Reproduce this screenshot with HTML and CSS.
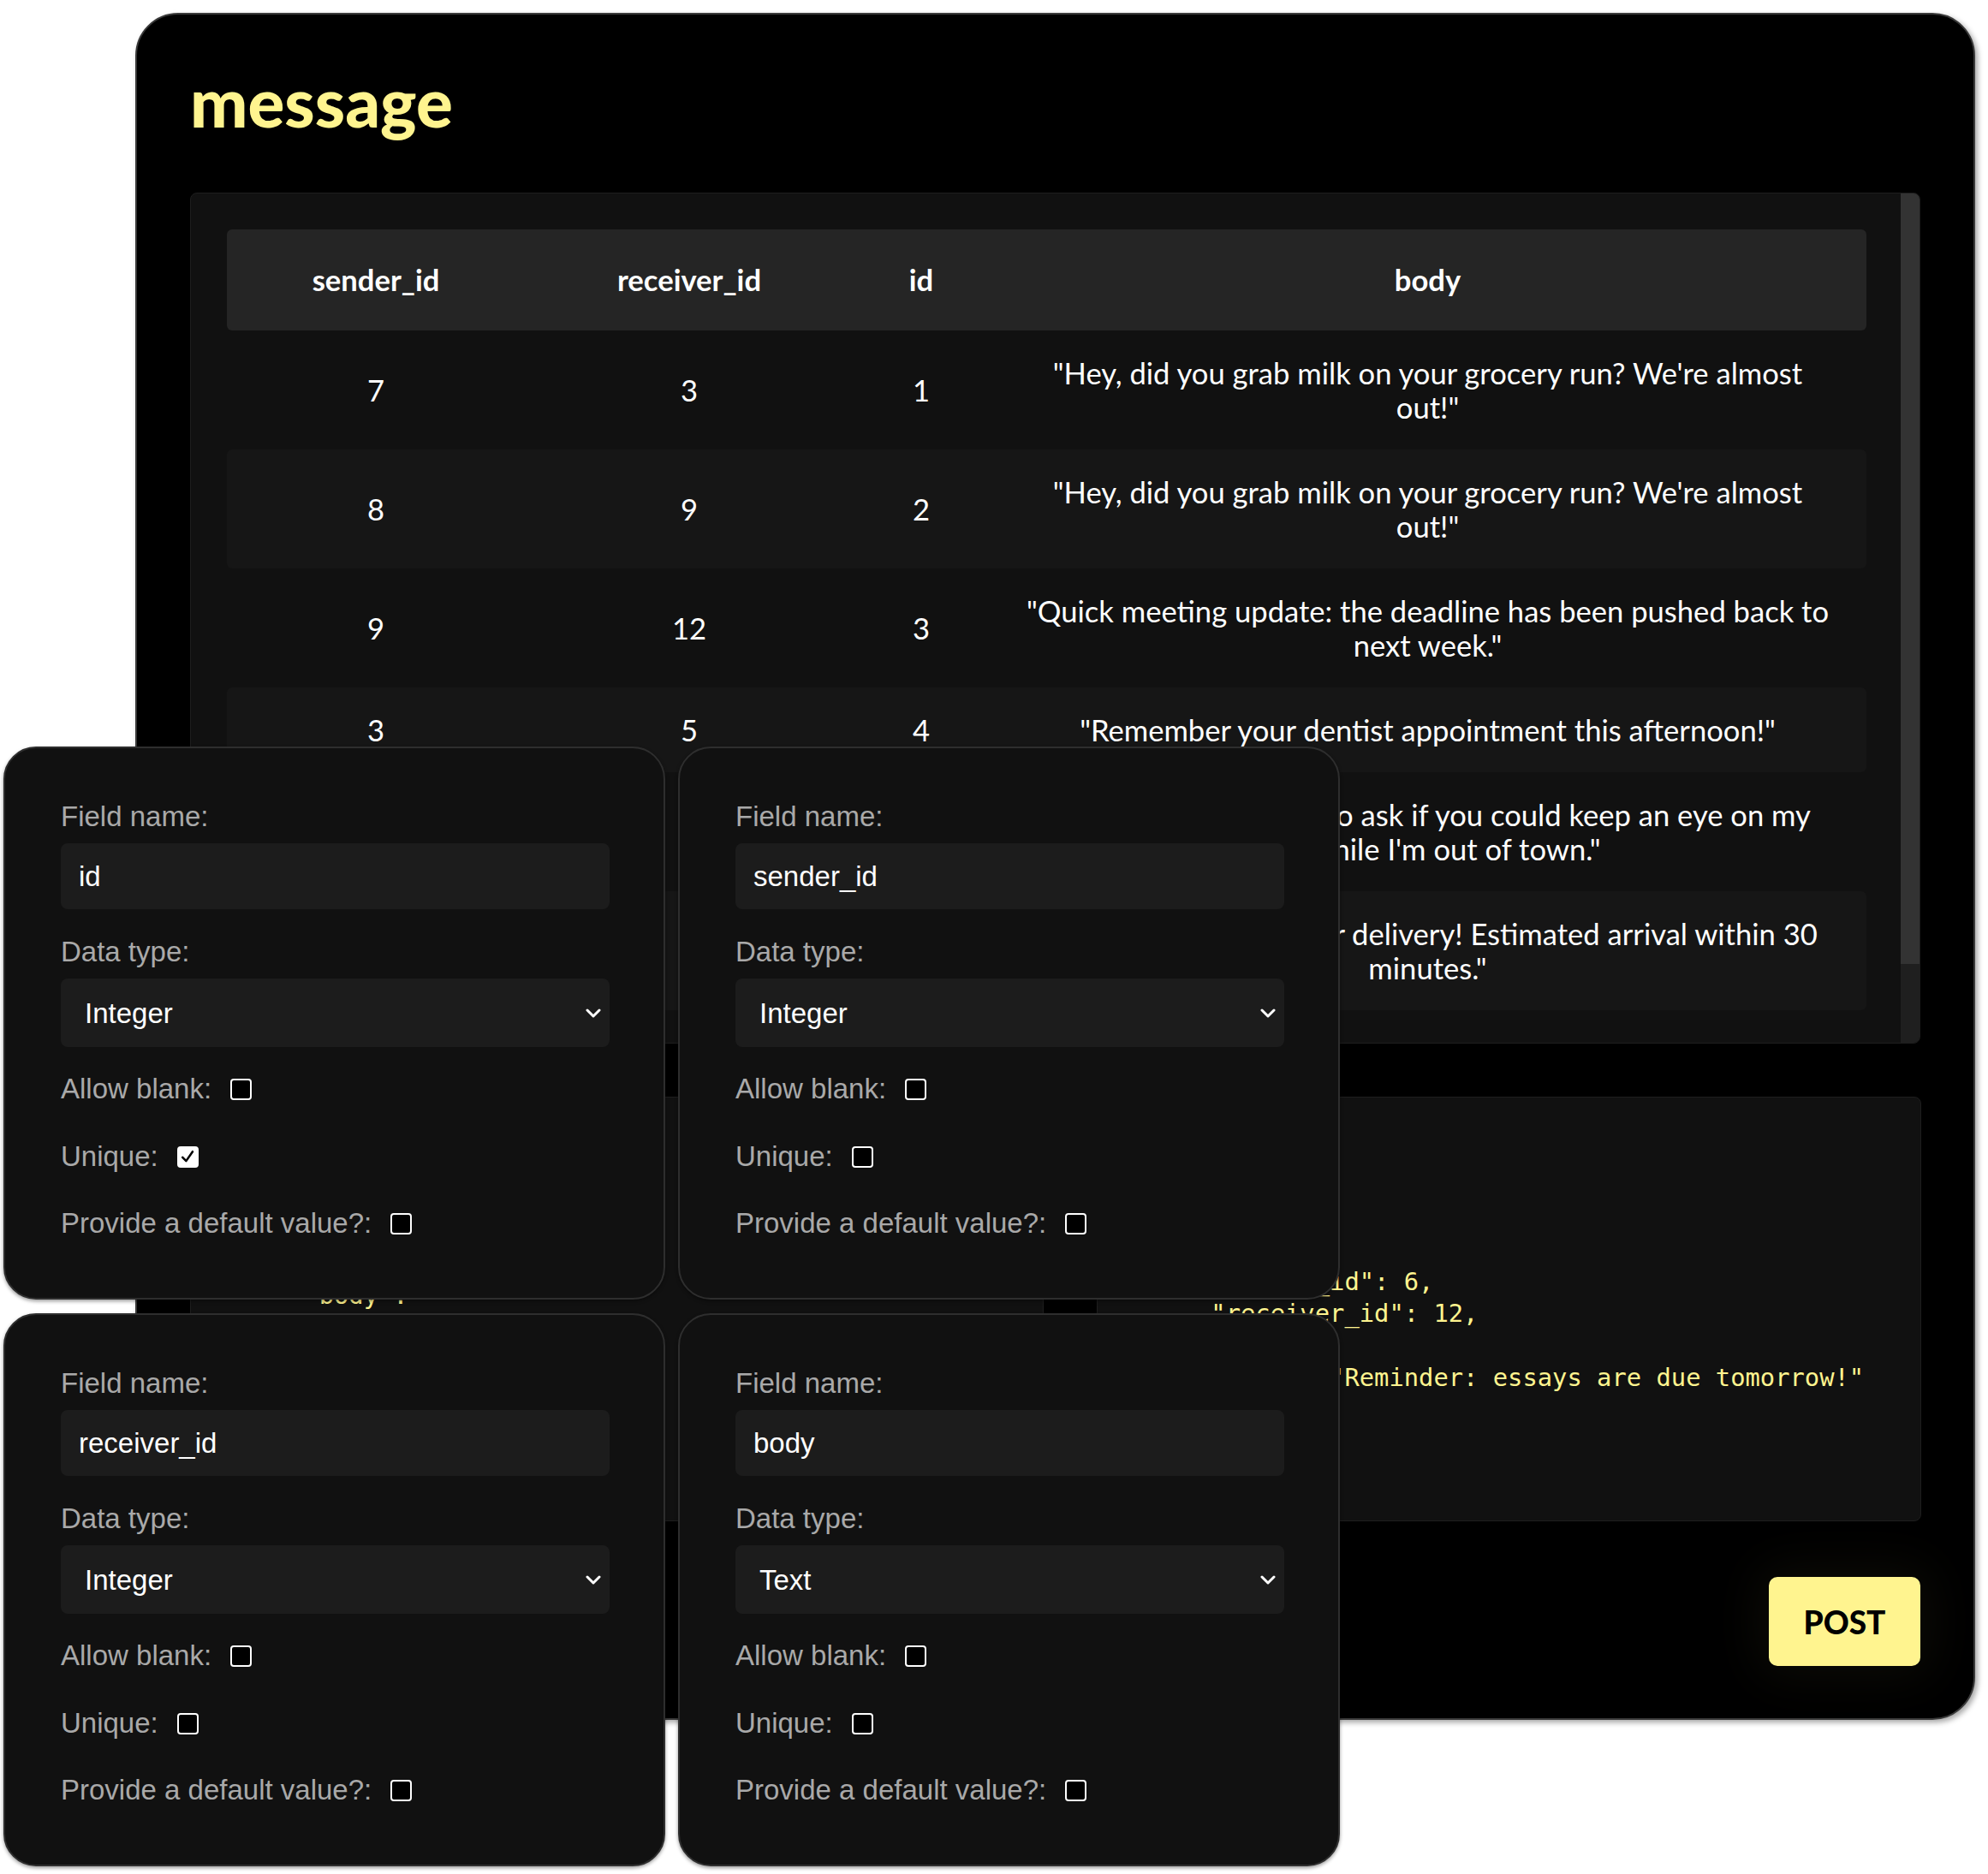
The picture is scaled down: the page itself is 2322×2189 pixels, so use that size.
FILE: index.html
```html
<!DOCTYPE html>
<html lang="en">
<head>
<meta charset="utf-8">
<title>message</title>
<link rel="stylesheet" href="styles.css">
</head>
<body>
<main class="window">
  <h1 class="title">message</h1>
  <div class="table-box">
    <div class="table-scroll">
      <table class="data">
        <colgroup><col class="c1"><col class="c2"><col class="c3"><col class="c4"></colgroup>
        <thead>
          <tr><th>sender_id</th><th>receiver_id</th><th>id</th><th>body</th></tr>
        </thead>
        <tbody>
          <tr><td>7</td><td>3</td><td>1</td><td>"Hey, did you grab milk on your grocery run? We're almost out!"</td></tr>
          <tr><td>8</td><td>9</td><td>2</td><td>"Hey, did you grab milk on your grocery run? We're almost out!"</td></tr>
          <tr><td>9</td><td>12</td><td>3</td><td>"Quick meeting update: the deadline has been pushed back to next week."</td></tr>
          <tr><td>3</td><td>5</td><td>4</td><td>"Remember your dentist appointment this afternoon!"</td></tr>
          <tr><td>5</td><td>7</td><td>5</td><td>"Hey friend, I wanted to ask if you could keep an eye on my dog while I'm out of town."</td></tr>
          <tr><td>12</td><td>8</td><td>6</td><td>"Your package is out for delivery! Estimated arrival within 30 minutes."</td></tr>
        </tbody>
      </table>
    </div>
    <div class="scrollbar"><div class="thumb"></div></div>
  </div>
  <div class="code-row">
<pre class="code code-left">{
    "sender_id": int,
    "receiver_id": int,
    "id": int,
    "body":
        text
}</pre>
<pre class="code code-right">{
    "sender_id": 6,
    "receiver_id": 12,
    "id": 7,
    "body": "Reminder: essays are due tomorrow!"
}</pre>
  </div>
  <div class="actions"><button class="post" type="button">POST</button></div>
</main>

<div class="fields">
  <section class="field-card">
    <label class="lbl">Field name:</label>
    <input class="text-in" type="text" value="id">
    <label class="lbl lbl-gap">Data type:</label>
    <div class="select-wrap">
      <select class="sel"><option>Integer</option></select>
      <svg class="chev" viewBox="0 0 18 11" width="18" height="11"><path d="M2 2 L9 9 L16 2" fill="none" stroke="#fff" stroke-width="3" stroke-linecap="round" stroke-linejoin="round"/></svg>
    </div>
    <div class="check-row r1"><span class="lbl">Allow blank:</span><span class="box"></span></div>
    <div class="check-row r2"><span class="lbl">Unique:</span><span class="box on"><svg viewBox="0 0 25 25" width="21" height="21"><path d="M5 13 L10 18 L19 5" fill="none" stroke="#000" stroke-width="3" stroke-linecap="round" stroke-linejoin="round"/></svg></span></div>
    <div class="check-row r3"><span class="lbl">Provide a default value?:</span><span class="box"></span></div>
  </section>

  <section class="field-card">
    <label class="lbl">Field name:</label>
    <input class="text-in" type="text" value="sender_id">
    <label class="lbl lbl-gap">Data type:</label>
    <div class="select-wrap">
      <select class="sel"><option>Integer</option></select>
      <svg class="chev" viewBox="0 0 18 11" width="18" height="11"><path d="M2 2 L9 9 L16 2" fill="none" stroke="#fff" stroke-width="3" stroke-linecap="round" stroke-linejoin="round"/></svg>
    </div>
    <div class="check-row r1"><span class="lbl">Allow blank:</span><span class="box"></span></div>
    <div class="check-row r2"><span class="lbl">Unique:</span><span class="box"></span></div>
    <div class="check-row r3"><span class="lbl">Provide a default value?:</span><span class="box"></span></div>
  </section>

  <section class="field-card">
    <label class="lbl">Field name:</label>
    <input class="text-in" type="text" value="receiver_id">
    <label class="lbl lbl-gap">Data type:</label>
    <div class="select-wrap">
      <select class="sel"><option>Integer</option></select>
      <svg class="chev" viewBox="0 0 18 11" width="18" height="11"><path d="M2 2 L9 9 L16 2" fill="none" stroke="#fff" stroke-width="3" stroke-linecap="round" stroke-linejoin="round"/></svg>
    </div>
    <div class="check-row r1"><span class="lbl">Allow blank:</span><span class="box"></span></div>
    <div class="check-row r2"><span class="lbl">Unique:</span><span class="box"></span></div>
    <div class="check-row r3"><span class="lbl">Provide a default value?:</span><span class="box"></span></div>
  </section>

  <section class="field-card">
    <label class="lbl">Field name:</label>
    <input class="text-in" type="text" value="body">
    <label class="lbl lbl-gap">Data type:</label>
    <div class="select-wrap">
      <select class="sel"><option>Text</option></select>
      <svg class="chev" viewBox="0 0 18 11" width="18" height="11"><path d="M2 2 L9 9 L16 2" fill="none" stroke="#fff" stroke-width="3" stroke-linecap="round" stroke-linejoin="round"/></svg>
    </div>
    <div class="check-row r1"><span class="lbl">Allow blank:</span><span class="box"></span></div>
    <div class="check-row r2"><span class="lbl">Unique:</span><span class="box"></span></div>
    <div class="check-row r3"><span class="lbl">Provide a default value?:</span><span class="box"></span></div>
  </section>
</div>
</body>
</html>
```

FILE: styles.css
```css
* { box-sizing: border-box; }

html, body {
  margin: 0;
  background: #fff;
}

body {
  width: 2322px;
  height: 2189px;
  position: relative;
  overflow: hidden;
}

/* ---------- main window ---------- */
.window {
  margin: 15px 0 0 158px;
  width: 2149px;
  height: 1994px;
  background: #000;
  border: 2px solid #3a3a3a;
  border-radius: 50px;
  padding: 62px 62px 0 62px;
  display: flex;
  flex-direction: column;
  box-shadow: 3px 3px 6px rgba(0, 0, 0, 0.35);
}

.title {
  margin: 0 0 68px 0;
  font-family: Lato, "Open Sans", sans-serif;
  font-weight: 900;
  font-size: 80px;
  line-height: 78px;
  color: #fff48f;
}

/* ---------- table ---------- */
.table-box {
  height: 994px;
  flex: none;
  display: flex;
  background: #111;
  border: 1px solid #1e1e1e;
  border-radius: 8px;
  overflow: hidden;
}

.table-scroll {
  flex: 1;
  min-width: 0;
  padding: 42px 40px 0 42px;
  overflow: hidden;
}

.scrollbar {
  width: 22px;
  flex: none;
  background: #1f1f1f;
}

.thumb {
  height: 900px;
  background: #333;
}

.data {
  width: 100%;
  table-layout: fixed;
  border-collapse: separate;
  border-spacing: 0;
  font-family: Lato, "Open Sans", sans-serif;
  color: #fff;
}

.c1 { width: 348px; }
.c2 { width: 384px; }
.c3 { width: 158px; }

.data th {
  background: #252525;
  font-weight: 700;
  font-size: 34.6px;
  line-height: 40px;
  padding: 39px 30px;
  text-align: center;
}

.data th:first-child { border-radius: 6px 0 0 6px; }
.data th:last-child { border-radius: 0 6px 6px 0; }

.data td {
  font-weight: 400;
  font-size: 34.6px;
  line-height: 40px;
  padding: 29.5px 30px;
  text-align: center;
  vertical-align: middle;
}

.data td:last-child { padding: 29.5px 40px; }

.data tbody tr:nth-child(even) td { background: #161616; }
.data tbody tr:nth-child(even) td:first-child { border-radius: 6px 0 0 6px; }
.data tbody tr:nth-child(even) td:last-child { border-radius: 0 6px 6px 0; }

/* ---------- code panels ---------- */
.code-row {
  margin-top: 62px;
  height: 496px;
  flex: none;
  display: grid;
  grid-template-columns: 997px 963px;
  column-gap: 62px;
}

.code {
  margin: 0;
  background: #111;
  border: 1px solid #1e1e1e;
  border-radius: 8px;
  padding: 63px;
  font-family: "DejaVu Sans Mono", "Liberation Mono", monospace;
  font-size: 28.8px;
  line-height: 37.5px;
  color: #fff48f;
  overflow: hidden;
}

.code-right { padding-top: 159px; }

/* ---------- action ---------- */
.actions {
  margin-top: 65px;
  display: flex;
  justify-content: flex-end;
}

.post {
  width: 177px;
  height: 104px;
  border: none;
  border-radius: 10px;
  background: #fff48f;
  color: #000;
  font-family: Lato, "Open Sans", sans-serif;
  font-weight: 900;
  font-size: 37px;
  box-shadow: 0 0 60px 12px rgba(255, 244, 143, 0.05);
}

/* ---------- floating field cards ---------- */
.fields {
  position: absolute;
  left: 4px;
  top: 872px;
  display: grid;
  grid-template-columns: 773px 773px;
  grid-template-rows: 646px 646px;
  column-gap: 15px;
  row-gap: 16px;
}

.field-card {
  background: #111;
  border: 2px solid #2e2e2e;
  border-radius: 38px;
  padding: 61px 63px 0 65px;
  display: flex;
  flex-direction: column;
  box-shadow: 0 2px 4px rgba(0, 0, 0, 0.4);
}

.lbl {
  display: block;
  font-family: "Liberation Sans", Arial, sans-serif;
  font-size: 33px;
  line-height: 38px;
  color: #a9a9a9;
}

.lbl-gap { margin-top: 31px; }

.text-in {
  margin-top: 12px;
  height: 77px;
  width: 100%;
  border: none;
  border-radius: 8px;
  background: #1c1c1c;
  color: #fff;
  font-family: "Liberation Sans", Arial, sans-serif;
  font-size: 33px;
  padding: 0 21px;
  outline: none;
}

.select-wrap {
  margin-top: 12px;
  height: 80px;
  position: relative;
}

.sel {
  width: 100%;
  height: 100%;
  appearance: none;
  -webkit-appearance: none;
  border: none;
  border-radius: 8px;
  background: #1c1c1c;
  color: #fff;
  font-family: "Liberation Sans", Arial, sans-serif;
  font-size: 33px;
  padding: 0 28px;
  outline: none;
}

.chev {
  position: absolute;
  right: 10px;
  top: 35px;
}

.check-row {
  display: flex;
  align-items: center;
  gap: 22px;
  height: 38px;
}

.r1 { margin-top: 30px; }
.r2 { margin-top: 41px; }
.r3 { margin-top: 40px; }

.box {
  width: 25px;
  height: 25px;
  border: 2px solid #fff;
  border-radius: 4px;
  background: #000;
  display: flex;
  align-items: center;
  justify-content: center;
}

.box.on { background: #fff; }
```
